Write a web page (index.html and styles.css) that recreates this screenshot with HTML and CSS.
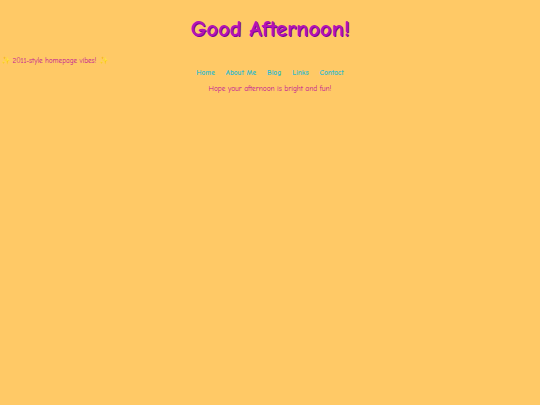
FILE: index.html
```html
<!DOCTYPE html>
<html>
<head>
<meta charset="utf-8">
<link rel="stylesheet" href="styles.css">
</head>
<body>
<h1 class="title">Good Afternoon!</h1>
<div class="ticker"><span class="spark">✨</span> 2011-style homepage vibes! <span class="spark">✨</span></div>
<nav class="nav">
  <a href="#">Home</a>
  <a href="#">About Me</a>
  <a href="#">Blog</a>
  <a href="#">Links</a>
  <a href="#">Contact</a>
</nav>
<p class="msg">Hope your afternoon is bright and fun!</p>
</body>
</html>
```
FILE: styles.css
```css
html, body {
  margin: 0;
  padding: 0;
  background: #ffc966;
  font-family: "Comic Sans MS", "Comic Neue", cursive, sans-serif;
}
.title {
  margin: 15px 0 0;
  text-align: center;
  font-size: 22.5px;
  line-height: 28px;
  color: #b414b4;
  text-shadow: 1px 1px 0 #7a00a0;
}
.ticker {
  margin-top: 12px;
  padding-left: 1px;
  font-size: 7.2px;
  line-height: 12px;
  color: #c0109a;
}
.spark {
  color: #ffe866;
  font-size: 7.6px;
}
.nav {
  display: flex;
  justify-content: center;
  gap: 11px;
  font-size: 7.4px;
  line-height: 12px;
}
.nav a {
  color: #33bbcc;
  font-weight: bold;
  text-decoration: none;
}
.msg {
  margin: 4px 0 0;
  text-align: center;
  font-size: 7.4px;
  line-height: 12px;
  color: #c0109a;
}
```
